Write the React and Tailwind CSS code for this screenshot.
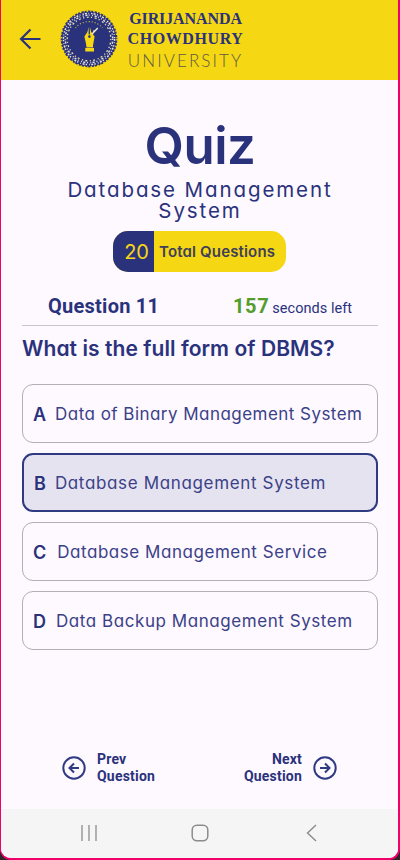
import React from "react";

const SANS = "font-['Inter','Open_Sans',sans-serif] [font-feature-settings:'cv11']";
const ROBOTO = "font-['Roboto',sans-serif]";

const options = [
  { letter: "A", text: "Data of Binary Management System", gap: "ml-[9px]", tracking: "tracking-[0.46px]" },
  { letter: "B", text: "Database Management System", gap: "ml-[9px]", tracking: "tracking-[0.65px]", selected: true },
  { letter: "C", text: "Database Management Service", gap: "ml-[11px]", tracking: "tracking-[0.54px]" },
  { letter: "D", text: "Data Backup Management System", gap: "ml-[10px]", tracking: "tracking-[0.56px]" },
];

function Seal() {
  return (
    <svg className="h-[58px] w-[58px] shrink-0" viewBox="0 0 58 58" fill="none">
      <circle cx="29" cy="29" r="28.4" fill="#2a327c" />
      <circle cx="29" cy="29" r="28" stroke="#f6d713" strokeWidth="1.6" strokeDasharray="1.6 2.3 1 1.9" />
      <circle cx="29" cy="29" r="25.6" stroke="#e9e4ce" strokeWidth="1.5" strokeDasharray="2 1.5 0.8 2.1 1.4 1.1" />
      <circle cx="29" cy="29" r="23.7" stroke="#dcd8d8" strokeWidth="1.5" strokeDasharray="1 1.7 2.2 1.3 0.9 2.4" />
      <circle cx="29" cy="29" r="21.8" stroke="#e6dfa0" strokeWidth="1.3" strokeDasharray="1.2 2.6 2 2.2" />
      <path d="M15.5 18A17.5 17.5 0 0 1 42.5 18" stroke="#d9c63a" strokeWidth="1.1" strokeDasharray="1 2" />
      <path d="M28.6 17V24.5H29.9V17L31.2 22L34.6 26.5L33 35.5H26.4L24.4 26.5L27.4 22Z" fill="#f6d713" />
      <circle cx="29.4" cy="26.6" r="1.3" fill="#2a327c" />
      <path d="M26.4 34.5H33V37.4H26.4Z" fill="#f6d713" />
      <path d="M25.3 37.9H34V41.5H25.3Z" fill="#f6d713" />
      <path d="M32 24L37.8 18M33.2 21.5L35.8 20.4" stroke="#f4eed0" strokeWidth="1.4" />
    </svg>
  );
}

function Header() {
  return (
    <header className="flex h-20 shrink-0 bg-[#f6d713] pt-[10px] text-[#2a327c]">
      <svg className="mt-[18px] ml-[18px] h-[22px] w-[22px]" viewBox="0 0 22 22" fill="none" stroke="#2a327c" strokeWidth="2.2">
        <path d="M21.5 11H2.5M11.5 1.5L2 11L11.5 20.5" />
      </svg>
      <div className="ml-[19px]"><Seal /></div>
      <div className="ml-[8px] flex w-[119px] flex-col items-center whitespace-nowrap font-['Liberation_Serif',serif] font-bold">
        <div className="h-5 text-[16px] leading-[18px] tracking-[-0.1px]">GIRIJANANDA</div>
        <div className="h-5 text-[16px] leading-[18px] tracking-[0.6px]">CHOWDHURY</div>
        <div className="h-5 font-['Lato',sans-serif] text-[17px] leading-[21px] font-light tracking-[2.1px] text-[#5c5a45]">UNIVERSITY</div>
      </div>
    </header>
  );
}

function Option({ letter, text, gap, tracking, selected }) {
  return (
    <button
      className={`flex h-[59px] w-full items-center rounded-[11px] pt-px pl-[10px] whitespace-nowrap ${
        selected ? "border-2 border-[#2f3a82] bg-[#e6e3f0]" : "border border-[#b3b0b5]"
      }`}
    >
      <span className="text-[18px] font-semibold">{letter}</span>
      <span className={`pt-px text-[17px] text-[#3a4187] ${gap} ${tracking}`}>{text}</span>
    </button>
  );
}

function CircleArrow({ flip }) {
  return (
    <svg className={`h-6 w-6 ${flip ? "-scale-x-100" : ""}`} viewBox="0 0 24 24" fill="none" stroke="#2f3a82" strokeWidth="2">
      <circle cx="12" cy="12" r="10.7" />
      <path d="M17 12H8M12 7.5L7.5 12L12 16.5" />
    </svg>
  );
}

function Footer() {
  return (
    <nav className="flex h-[49px] shrink-0 items-center bg-[#f5f5f5] pb-px">
      <svg className="ml-20 h-4 w-4" viewBox="0 0 16 16" stroke="#8b8b8b" strokeWidth="1.3">
        <path d="M1 0V16M8 0V16M15 0V16" />
      </svg>
      <svg className="ml-[94px] h-[18px] w-[18px]" viewBox="0 0 18 18" fill="none" stroke="#8b8b8b" strokeWidth="1.5">
        <rect x="1.2" y="1.2" width="15.6" height="15.6" rx="4.8" />
      </svg>
      <svg className="ml-[97px] h-[18px] w-[11px]" viewBox="0 0 11 18" fill="none" stroke="#8b8b8b" strokeWidth="1.4">
        <path d="M10 1L1.5 9L10 17" />
      </svg>
    </nav>
  );
}

export default function App() {
  return (
    <div className="h-[860px] w-[400px] overflow-hidden bg-[#2d2529]">
      <div className={`flex h-[860px] w-[400px] flex-col overflow-hidden rounded-b-[11px] border-r-2 border-b-2 border-l border-[#f00068] bg-[#fef8ff] text-[#2a327c] ${SANS}`}>
        <Header />
        <main className="flex flex-1 flex-col pr-[20px] pl-[21px]">
          <h1 className="mt-[40px] h-[56px] text-center text-[51px] leading-[52px] font-semibold tracking-[-0.5px]">Quiz</h1>
          <h2 className="mt-[3px] text-center text-[20.5px] leading-[21px] tracking-[1.9px]">
            Database Management
            <br />
            System
          </h2>
          <div className="mt-[10px] ml-[91px] flex h-[41px] w-[173px] items-center overflow-hidden rounded-[15px] bg-[#f6d713] whitespace-nowrap">
            <div className="flex h-full w-[41px] items-center justify-end bg-[#2a327c] pr-[5px] text-[20px] text-[#f6d713]">20</div>
            <div className="ml-[5px] pt-px text-[15px] font-semibold tracking-[0.16px] text-[#3e3f5a]">Total Questions</div>
          </div>
          <div className={`mt-[21px] flex h-[33px] border-b border-[#c9c5cc] whitespace-nowrap ${ROBOTO}`}>
            <div className="ml-[26px] w-[185px] text-[20px] leading-[27px] font-bold tracking-[0.25px]">Question 11</div>
            <div className="flex items-baseline leading-[27px]">
              <span className="text-[20px] font-bold tracking-[0.6px] text-[#539d2d]">157</span>
              <span className="ml-[3px] text-[14.5px] tracking-[0.05px]">seconds left</span>
            </div>
          </div>
          <h3 className="mt-[9px] text-[21px] leading-[28px] font-semibold tracking-[0.07px] whitespace-nowrap">What is the full form of DBMS?</h3>
          <div className="mt-[21px] flex flex-col gap-[10px]">
            {options.map((o) => (
              <Option key={o.letter} {...o} />
            ))}
          </div>
          <div className={`mt-auto mb-[24px] flex items-center justify-between pr-[41px] pl-[40px] text-[14px] leading-[17px] font-bold tracking-[0.2px] ${ROBOTO}`}>
            <div className="flex items-center gap-[11px]">
              <CircleArrow />
              <div>Prev<br />Question</div>
            </div>
            <div className="flex items-center gap-[11px] text-right">
              <div>Next<br />Question</div>
              <CircleArrow flip />
            </div>
          </div>
        </main>
        <Footer />
      </div>
    </div>
  );
}
